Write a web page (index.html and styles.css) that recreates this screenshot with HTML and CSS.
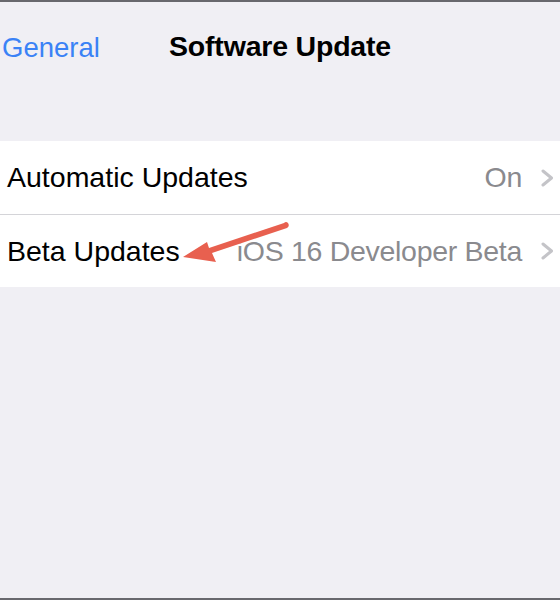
FILE: index.html
```html
<!DOCTYPE html>
<html lang="en">
  <head>
    <meta charset="UTF-8" />
    <meta name="viewport" content="width=device-width, initial-scale=1.0" />
    <title>Software Update</title>
    <link rel="stylesheet" href="styles.css">
  </head>
  <body>
    <div class="screen">
      <div class="nav">
        <span class="back">General</span>
        <h1 class="title">Software Update</h1>
      </div>

      <!-- Settings group -->
      <div class="group">
        <div class="row">
          <span class="label">Automatic Updates</span>
          <span class="value">On</span>
          <svg class="chevron" viewBox="0 0 13 18" width="13" height="18">
            <polyline points="2,2 10.5,9 2,16" />
          </svg>
        </div>
        <div class="row">
          <span class="label">Beta Updates</span>
          <span class="value">iOS 16 Developer Beta</span>
          <svg class="chevron" viewBox="0 0 13 18" width="13" height="18">
            <polyline points="2,2 10.5,9 2,16" />
          </svg>
        </div>

        <!-- annotation arrow -->
        <svg class="arrow" viewBox="0 0 120 50" width="120" height="50">
          <path d="M103 6 Q105 4 107 6 Q109 9 106 11 L31 36 L35 45 L2 40 L26 25 L28 31 Z" />
        </svg>
      </div>
    </div>
  </body>
</html>
```

FILE: styles.css
```css
body {
  margin: 0;
  font-family: "Liberation Sans", Arial, sans-serif;
}

.screen {
  height: 600px;
  box-sizing: border-box;
  background: #f0eff4;
  border-top: 2px solid #68686d;
  border-bottom: 2px solid #68686d;
}

/* Navigation bar */
.nav {
  position: relative;
  height: 89px;
  display: flex;
  align-items: center;
  justify-content: center;
}

.back {
  position: absolute;
  left: 2px;
  top: 30px;
  font-size: 27.5px;
  color: #3a82f6;
}

.title {
  margin: 0;
  font-size: 28.5px;
  font-weight: bold;
  color: #000;
  letter-spacing: -0.2px;
}

/* Group */
.group {
  position: relative;
  margin-top: 50px;
  background: #fff;
}

.row {
  display: flex;
  align-items: center;
  height: 73px;
  padding: 0 6px 0 7px;
  font-size: 28.5px;
}

.row + .row {
  border-top: 1px solid #d4d4d8;
  height: 72px;
}

.label {
  flex: 1;
  color: #000;
}

.value {
  color: #8a8a8e;
  margin-right: 19px;
  letter-spacing: -0.3px;
}

.chevron {
  fill: none;
  stroke: #c4c4c8;
  stroke-width: 3;
  stroke-linecap: round;
  stroke-linejoin: round;
}

.arrow {
  position: absolute;
  left: 181px;
  top: 76px;
  fill: #e8604f;
}
```
